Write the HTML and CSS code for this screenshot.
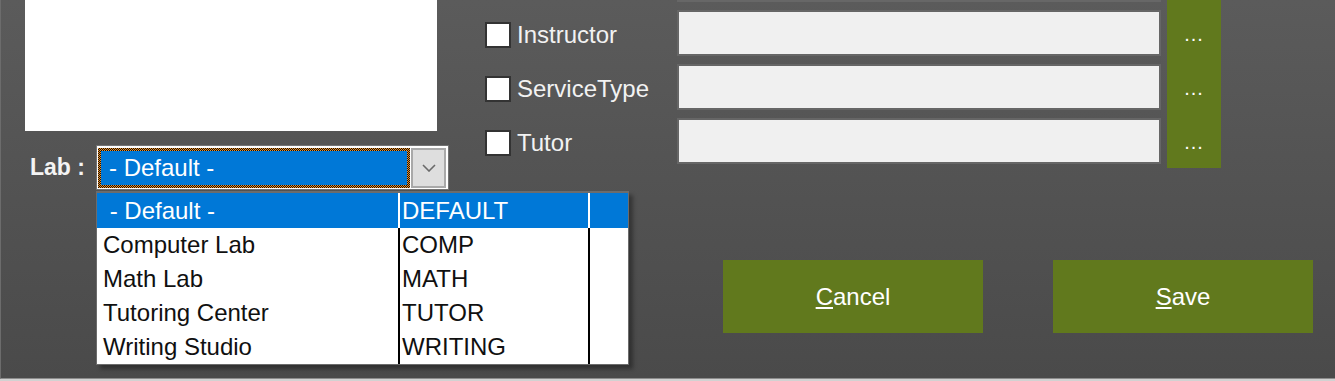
FILE: index.html
```html
<!DOCTYPE html>
<html lang="en">
<head>
    <meta charset="UTF-8">
    <title>Session Filter</title>
    <link rel="stylesheet" href="styles.css">
</head>
<body>
    <div class="window">
        <div class="top">
            <div class="left">
                <div class="white-box"></div>
                <div class="lab-row">
                    <span class="lab-label">Lab :</span>
                    <div class="combo">
                        <div class="combo-value">
                            <div class="combo-text">- Default -</div>
                        </div>
                        <div class="combo-btn">
                            <svg width="14" height="8" viewBox="0 0 14 8">
                                <polyline points="1,1 7,7 13,1" fill="none" stroke="#6a6a6a" stroke-width="1.6"/>
                            </svg>
                        </div>

                        <div class="dropdown">
                            <table>
                                <tr class="selected">
                                    <td class="c-name">&nbsp;- Default -</td>
                                    <td class="c-code">DEFAULT</td>
                                    <td class="c-extra"></td>
                                </tr>
                                <tr>
                                    <td class="c-name">Computer Lab</td>
                                    <td class="c-code">COMP</td>
                                    <td class="c-extra"></td>
                                </tr>
                                <tr>
                                    <td class="c-name">Math Lab</td>
                                    <td class="c-code">MATH</td>
                                    <td class="c-extra"></td>
                                </tr>
                                <tr>
                                    <td class="c-name">Tutoring Center</td>
                                    <td class="c-code">TUTOR</td>
                                    <td class="c-extra"></td>
                                </tr>
                                <tr>
                                    <td class="c-name">Writing Studio</td>
                                    <td class="c-code">WRITING</td>
                                    <td class="c-extra"></td>
                                </tr>
                            </table>
                        </div>
                    </div>
                </div>
            </div>

            <div class="filters">
                <div></div>
                <div class="input-edge"></div>
                <div class="pick-btn pick-tail"></div>

                <label class="check">
                    <span class="box"></span>
                    <span>Instructor</span>
                </label>
                <div class="text-input"></div>
                <div class="pick-btn">...</div>

                <label class="check">
                    <span class="box"></span>
                    <span>ServiceType</span>
                </label>
                <div class="text-input"></div>
                <div class="pick-btn">...</div>

                <label class="check">
                    <span class="box"></span>
                    <span>Tutor</span>
                </label>
                <div class="text-input"></div>
                <div class="pick-btn">...</div>
            </div>
        </div>

        <div class="actions">
            <button class="action-btn"><u>C</u>ancel</button>
            <button class="action-btn"><u>S</u>ave</button>
        </div>
    </div>
</body>
</html>
```

FILE: styles.css
```css
* {
    box-sizing: border-box;
    margin: 0;
    padding: 0;
}

html {
    background: #d2d2d2;
}

body {
    font-family: "Liberation Sans", Arial, sans-serif;
    color: #f2f2f2;
}

.window {
    height: 379px;
    background: linear-gradient(180deg, #5b5b5b 0%, #4a4a4a 100%);
    border-bottom: 1px solid #8c8c8c;
    border-left: 1px solid #6c6c6c;
    overflow: hidden;
}

.top {
    display: flex;
    align-items: flex-start;
    height: 190px;
}

.left {
    width: 484px;
    padding-left: 24px;
}

.white-box {
    width: 412px;
    height: 131px;
    background: #ffffff;
}

.lab-row {
    display: flex;
    align-items: center;
    margin-top: 14px;
}

.lab-label {
    width: 66px;
    margin-left: 5px;
    font-weight: bold;
    font-size: 23px;
    color: #f4f4f4;
}

.combo {
    position: relative;
    display: flex;
    gap: 1px;
    width: 353px;
    height: 45px;
    padding: 2px 2px 1px 1px;
    background: #ffffff;
    border: 1px solid #727272;
}

.combo-value {
    flex: 1;
    padding: 3px;
    background: repeating-conic-gradient(#111 0 25%, #f7901e 0 50%) 0 0 / 2px 2px;
}

.combo-text {
    height: 100%;
    background: #0078d7;
    color: #ffffff;
    font-size: 24px;
    line-height: 34px;
    padding-left: 8px;
}

.combo-btn {
    width: 35px;
    display: flex;
    align-items: center;
    justify-content: center;
    background: #dedede;
    border: 2px solid #a9a9a9;
}

.dropdown {
    position: absolute;
    top: 45px;
    left: -1px;
    width: 533px;
    background: #ffffff;
    border: 1px solid #6c6c6c;
    border-top-width: 2px;
    box-shadow: 4px 4px 4px rgba(0, 0, 0, 0.35);
    z-index: 5;
}

.dropdown table {
    width: 100%;
    border-collapse: collapse;
    font-size: 24px;
    color: #101010;
}

.dropdown td {
    height: 34px;
    white-space: nowrap;
    padding: 0;
}

.dropdown .selected td {
    height: 35px;
    background: #0078d7;
    color: #ffffff;
}

.c-name {
    width: 302px;
    padding-left: 6px !important;
    border-right: 2px solid #000;
}

.c-code {
    width: 190px;
    padding-left: 2px !important;
    border-right: 2px solid #000;
}

.dropdown .selected .c-name,
.dropdown .selected .c-code {
    border-right-color: #ffffff;
}

.filters {
    display: grid;
    grid-template-columns: 186px 484px 54px;
    grid-template-rows: 6px 54px 54px 54px;
    column-gap: 6px;
}

.input-edge {
    height: 2px;
    background: #676767;
}

.check {
    display: flex;
    align-items: center;
    gap: 6px;
    padding-top: 4px;
    font-size: 24px;
    color: #f2f2f2;
}

.box {
    width: 26px;
    height: 26px;
    background: #ffffff;
    border: 2px solid #333333;
}

.text-input {
    margin-top: 4px;
    height: 46px;
    background: #f0f0f0;
    border: 2px solid #666666;
}

.pick-btn {
    background: #61791d;
    color: #ffffff;
    font-size: 20px;
    letter-spacing: 1px;
    line-height: 51px;
    padding-top: 3px;
    text-align: center;
}

.pick-tail {
    padding: 0;
}

.actions {
    display: flex;
    justify-content: flex-end;
    gap: 70px;
    margin-top: 70px;
    padding-right: 22px;
}

.action-btn {
    width: 260px;
    height: 73px;
    background: #61791d;
    border: none;
    color: #ffffff;
    font-family: "Liberation Sans", Arial, sans-serif;
    font-size: 24px;
    cursor: pointer;
}
```
